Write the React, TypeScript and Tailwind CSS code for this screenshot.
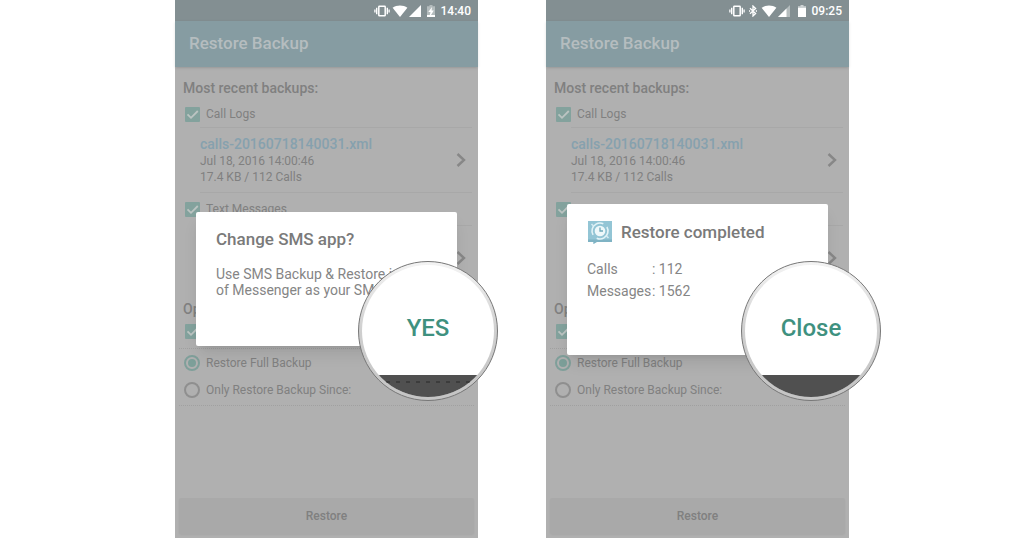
import React from 'react'
import type { ReactNode } from 'react'

function VibrateIcon() {
  return (
    <svg viewBox="0 0 16 12" className="h-3 w-4" fill="none" stroke="#fff" aria-hidden="true">
      <rect x="4.8" y="1.2" width="6.4" height="9.6" rx="0.6" strokeWidth="1.5" />
      <path d="M2.7 2.800v6.400M13.300 2.800v6.400" strokeWidth="1.4" />
      <path d="M0.900 4.400v3.200M15.100 4.400v3.200" strokeWidth="1.3" />
    </svg>
  )
}

function BluetoothIcon() {
  return (
    <svg viewBox="0 0 8 12" className="h-3 w-2" fill="none" stroke="#fff" strokeWidth="1.3" aria-hidden="true">
      <path d="M1 3.3 6.6 8.6 4 11V1l2.6 2.4L1 8.7" />
      <path d="M0 6h1.2M6.8 6H8" />
    </svg>
  )
}

function WifiIcon() {
  return (
    <svg viewBox="0 0 16 12" className="h-3 w-4" aria-hidden="true">
      <path d="M8 12 0.6 2.8C4.6-0.4 11.4-0.4 15.4 2.8Z" fill="#fff" />
    </svg>
  )
}

function SignalIcon({ weak }: { weak?: boolean }) {
  return (
    <svg viewBox="0 0 12 12" className="size-3" aria-hidden="true">
      <path d="M0 12 12 0v12Z" fill="#fff" opacity={weak ? 0.4 : 1} />
      {weak && <path d="M0 12 8.500 3.500V12Z" fill="#fff" />}
    </svg>
  )
}

function BatteryIcon({ charging }: { charging?: boolean }) {
  return (
    <svg viewBox="0 0 8 12" className="h-3 w-2" aria-hidden="true">
      <path d="M2.5 0h3v1.3H8V12H0V1.3h2.5Z" fill="#fff" opacity={charging ? 0.4 : 0.6} />
      {charging ? (
        <path d="M5 2 1.300 7h2.200L2.800 10H0v2h8v-2H4L6.800 5.600H4.600Z" fill="#fff" />
      ) : (
        <path d="M0 3h8v9H0Z" fill="#fff" />
      )}
    </svg>
  )
}

function AppIcon() {
  return (
    <svg viewBox="0 0 26 24" className="h-6 w-[26px]" fill="none" aria-hidden="true">
      <path d="M1 1h24v20H10l-3.500 3V21H1Z" fill="#93c5d5" />
      <path d="M1 19.500h24V22H10l-3.500 2v-2H1Z" fill="#7fb3c4" />
      <circle cx="13" cy="11" r="8" stroke="#e3f3f7" strokeWidth="1.6" strokeDasharray="20 5" transform="rotate(-30 13 11)" />
      <circle cx="13" cy="11" r="5.300" fill="#eef8fa" />
      <path d="M13 7.500V11h3" stroke="#6fa9ba" strokeWidth="1.300" />
      <path d="m4.500 4 2 2M21.500 18l-2-2" stroke="#d5ecf2" strokeWidth="1.600" />
    </svg>
  )
}

function Chevron() {
  return (
    <svg viewBox="0 0 10 14" className="h-3.5 w-2.5" fill="none" stroke="#878787" strokeWidth="2.4" aria-hidden="true">
      <path d="m1.500 1 6.500 6-6.500 6" />
    </svg>
  )
}

function CheckRow({ label, className }: { label?: string; className: string }) {
  return (
    <label className={`flex items-center gap-1.5 pl-2.5 text-xs ${className}`}>
      <span className="grid size-[15px] place-items-center">
        <input
          type="checkbox"
          defaultChecked
          aria-label={label ?? 'Option'}
          className="col-start-1 row-start-1 size-[15px] appearance-none rounded-[1px] bg-[#83a29d]"
        />
        <svg viewBox="0 0 15 15" className="pointer-events-none col-start-1 row-start-1 size-[15px]" fill="none" stroke="#bcc4c2" strokeWidth="1.8" aria-hidden="true">
          <path d="m2.500 7.300 3.500 3.500 6.800-6.800" />
        </svg>
      </span>
      {label}
    </label>
  )
}

function RadioRow({ name, label, checked }: { name: string; label: string; checked?: boolean }) {
  return (
    <label className="flex h-[27px] items-center gap-1.5 pl-[5px] text-xs">
      <span className="grid size-4 place-items-center">
        <input
          type="radio"
          name={name}
          defaultChecked={checked}
          className="peer col-start-1 row-start-1 size-4 appearance-none rounded-full border-2 border-[#8f8f8f] checked:border-[#7f9f9a]"
        />
        <span className="pointer-events-none col-start-1 row-start-1 hidden size-2 rounded-full bg-[#7c9f99] peer-checked:block" />
      </span>
      {label}
    </label>
  )
}

function BackupFile({ children }: { children?: ReactNode }) {
  return (
    <div className="ml-[25px] mr-1.5 flex h-[65px] items-center justify-between border-t border-[#a8a8a8] pr-1.5">
      <div>{children}</div>
      <Chevron />
    </div>
  )
}

function Lens({ label, className, children }: { label: string; className: string; children?: ReactNode }) {
  return (
    <div className={`absolute size-[140px] rounded-full border border-[#777] bg-linear-to-b from-[#f4f4f4] via-[#cfcfcf] to-[#c4c4c4] p-[3px] ${className}`}>
      <div className="flex size-full flex-col overflow-hidden rounded-full bg-white">
        <button type="button" className="flex-1 pt-4 text-2xl font-medium text-[#3f917f]">
          {label}
        </button>
        <div className="h-[22px] bg-[#505050] pt-1.5">{children}</div>
      </div>
    </div>
  )
}

function Phone({ id, status, children }: { id: string; status: ReactNode; children: ReactNode }) {
  return (
    <section className="relative flex min-h-screen w-[303px] flex-col bg-[#b0b0b0] text-[#808080]">
      <div className="flex h-[21px] items-center justify-end bg-[#838f92] pr-[7px] text-xs font-medium text-white">{status}</div>
      <header className="flex h-[46px] items-center bg-[#869ca2] px-3.5 shadow-sm">
        <h1 className="text-[17px] font-medium text-[#b5bdbf]">Restore Backup</h1>
      </header>

      <main className="flex flex-1 flex-col pt-3">
        <h2 className="mb-1 px-2 text-sm/[18px] font-medium">Most recent backups:</h2>
        <CheckRow label="Call Logs" className="h-[26px]" />
        <BackupFile>
          <a href="#calls" className="block text-sm/[18px] font-medium text-[#86a1ae]">calls-20160718140031.xml</a>
          <p className="text-xs/4">Jul 18, 2016 14:00:46</p>
          <p className="text-xs/4">17.4 KB / 112 Calls</p>
        </BackupFile>
        <div className="ml-[25px] mr-1.5 border-t border-[#a8a8a8]" />
        <CheckRow label="Text Messages" className="h-8" />
        <BackupFile />

        <h2 className="mt-2.5 px-2 text-sm/[18px] font-medium">Options:</h2>
        <CheckRow className="h-[26px]" />
        <div className="mx-1 mt-1 border-y border-dotted border-[#a0a0a0] pb-0.5">
          <RadioRow name={id} label="Restore Full Backup" checked />
          <RadioRow name={id} label="Only Restore Backup Since:" />
        </div>

        <button type="button" className="mx-1 mb-1 mt-auto h-9 rounded-[2px] bg-[#a9a9a9] text-xs font-medium shadow-xs">
          Restore
        </button>
      </main>

      <div className="absolute inset-x-0 bottom-0 top-5 flex items-center px-[21px]">{children}</div>
    </section>
  )
}

export default function App() {
  return (
    <div className="flex min-h-screen justify-center gap-[68px] bg-white font-['Roboto',sans-serif]">
      <Phone
        id="before"
        status={
          <>
            <VibrateIcon />
            <span className="ml-0.5 flex gap-px"><WifiIcon /><SignalIcon /></span>
            <span className="ml-1.5 mr-1.5"><BatteryIcon charging /></span>
            14:40
          </>
        }
      >
        <div role="dialog" aria-label="Change SMS app?" className="relative h-[134px] w-full rounded-[2px] bg-white px-5 pt-4 shadow-lg">
          <h2 className="text-[17px]/[22px] font-medium text-[#7a7a7a]">Change SMS app?</h2>
          <p className="mt-4 text-sm/4 text-[#858585]">
            Use SMS Backup &amp; Restore instead of Messenger as your SMS app?
          </p>
          <Lens label="YES" className="-bottom-[55px] -right-[41px]">
            <div className="flex justify-center gap-1.5">
              {Array.from({ length: 9 }, (_, i) => (
                <span key={i} className="h-0.5 w-1 bg-[#3c3c3c]" />
              ))}
            </div>
          </Lens>
        </div>
      </Phone>

      <Phone
        id="after"
        status={
          <>
            <VibrateIcon />
            <span className="ml-1 mr-1"><BluetoothIcon /></span>
            <span className="flex gap-px"><WifiIcon /><SignalIcon weak /></span>
            <span className="ml-2 mr-1.5"><BatteryIcon /></span>
            09:25
          </>
        }
      >
        <div role="dialog" aria-label="Restore completed" className="relative h-[151px] w-full rounded-[2px] bg-white px-5 pt-4 shadow-lg">
          <div className="flex items-center gap-2">
            <AppIcon />
            <h2 className="text-[17px]/[22px] font-medium text-[#7a7a7a]">Restore completed</h2>
          </div>
          <dl className="mt-3.5 grid grid-cols-[65px_1fr] text-sm/[22px] text-[#858585]">
            <dt>Calls</dt>
            <dd>: 112</dd>
            <dt>Messages</dt>
            <dd>: 1562</dd>
          </dl>
          <Lens label="Close" className="-bottom-[46px] -right-[53px]" />
        </div>
      </Phone>
    </div>
  )
}
